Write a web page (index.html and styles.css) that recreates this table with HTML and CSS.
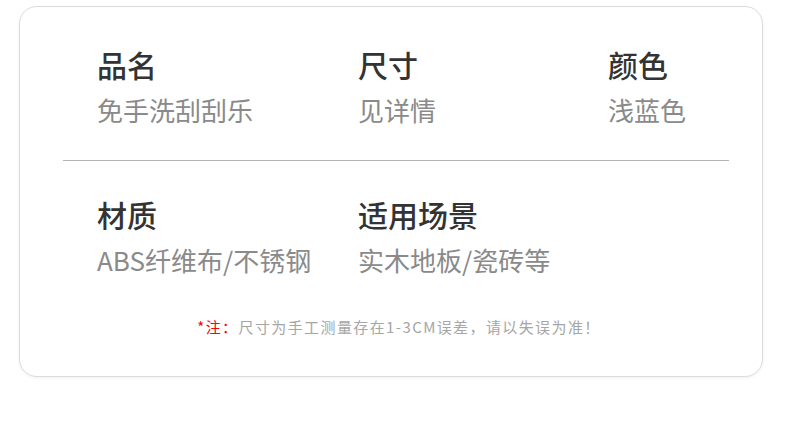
FILE: index.html
```html
<!DOCTYPE html>
<html lang="zh-CN">
<head>
<meta charset="utf-8">
<title>产品参数</title>
<link rel="stylesheet" href="styles.css">
</head>
<body>
<div class="card">
  <div class="row">
    <div class="item"><div class="label">品名</div><div class="value">免手洗刮刮乐</div></div>
    <div class="item"><div class="label">尺寸</div><div class="value">见详情</div></div>
    <div class="item"><div class="label">颜色</div><div class="value">浅蓝色</div></div>
  </div>
  <div class="divider"></div>
  <div class="row row2">
    <div class="item"><div class="label">材质</div><div class="value">ABS纤维布/不锈钢</div></div>
    <div class="item"><div class="label">适用场景</div><div class="value">实木地板/瓷砖等</div></div>
  </div>
  <p class="note"><span class="mark">*注：</span>尺寸为手工测量存在1-3CM误差，请以失误为准！</p>
</div>
</body>
</html>
```
FILE: styles.css
```css
html, body {
  margin: 0;
  padding: 0;
  background: #ffffff;
}
body {
  font-family: "Noto Sans CJK SC", "Noto Sans", sans-serif;
  width: 790px;
  height: 432px;
}
.card {
  box-sizing: border-box;
  margin: 6px 0 0 19px;
  width: 744px;
  height: 371px;
  border: 1px solid #dcdcdc;
  border-radius: 18px;
  box-shadow: 0 1px 3px rgba(0, 0, 0, 0.06);
  padding: 39px 0 0 0;
  background: #fff;
}
.row {
  display: grid;
  grid-template-columns: 261px 250px 1fr;
  padding-left: 77px;
}
.row2 {
  margin-top: 35px;
}
.label {
  font-size: 30px;
  line-height: 36px;
  font-weight: 500;
  color: #333333;
}
.value {
  margin-top: 12px;
  font-size: 26px;
  line-height: 32px;
  color: #8a8a8a;
}
.divider {
  margin: 34px 33px 0 43px;
  height: 1px;
  background: #b4b4b4;
}
.note {
  margin: 41px 0 0 0;
  text-align: center;
  font-size: 15px;
  line-height: 20px;
  letter-spacing: 1.4px;
  color: #a6a6a6;
  padding-left: 16px;
}
.mark {
  color: #ff0000;
}
```
